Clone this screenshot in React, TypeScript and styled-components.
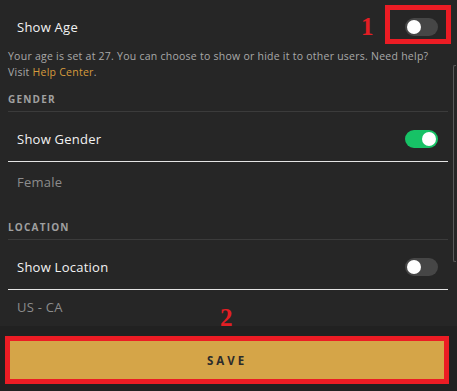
import React, { useState } from 'react';
import styled, { createGlobalStyle, css } from 'styled-components';

const GlobalStyle = createGlobalStyle`
  html, body {
    margin: 0;
    padding: 0;
    background: #262626;
  }
  body {
    font-family: "Open Sans", "Liberation Sans", sans-serif;
  }
`;

const Page = styled.div`
  position: relative;
  width: 457px;
  height: 391px;
  display: flex;
  flex-direction: column;
  overflow: hidden;
  background: #262626;
`;

const Content = styled.div`
  flex: 1;
  display: flex;
  flex-direction: column;
  padding: 0 9px 0 8px;
`;

const ToggleRow = styled.div<{ $first?: boolean }>`
  display: flex;
  align-items: center;
  justify-content: space-between;
  box-sizing: border-box;
  height: ${({ $first }) => ($first ? '48px' : '49px')};
  padding: ${({ $first }) => ($first ? '6px 10px 0 9px' : '5px 10px 0 9px')};
`;

const RowLabel = styled.span`
  font-size: 13px;
  letter-spacing: 0.25px;
  color: #f2f2f2;
`;

const Description = styled.p`
  margin: 0;
  font-size: 10.5px;
  line-height: 16px;
  letter-spacing: 0.25px;
  color: #a9a9a9;
`;

const HelpLink = styled.a`
  color: #d69b3c;
  text-decoration: none;
`;

const SectionLabel = styled.div<{ $gap: number }>`
  margin-top: ${({ $gap }) => $gap}px;
  font-size: 10px;
  line-height: 14px;
  font-weight: 700;
  letter-spacing: 1.2px;
  color: #a0a0a0;
`;

const Divider = styled.div<{ $light?: boolean }>`
  height: 1px;
  background: ${({ $light }) => ($light ? '#e4e4e4' : '#3b3b3b')};
  ${({ $light }) =>
    !$light &&
    css`
      margin-top: 5px;
    `}
`;

const ValueRow = styled.div<{ $height: number }>`
  display: flex;
  align-items: center;
  height: ${({ $height }) => $height}px;
  padding-left: 9px;
  font-size: 13px;
  letter-spacing: 0.25px;
  color: #8c8c8c;
`;

const Track = styled.button<{ $on: boolean }>`
  position: relative;
  width: 33px;
  height: 18px;
  padding: 0;
  border: none;
  border-radius: 9px;
  cursor: pointer;
  background: ${({ $on }) => ($on ? '#17c266' : '#464646')};
`;

const Knob = styled.span<{ $on: boolean }>`
  position: absolute;
  top: 2px;
  left: ${({ $on }) => ($on ? '17px' : '2px')};
  width: 14px;
  height: 14px;
  border-radius: 50%;
  background: #ffffff;
`;

const Footer = styled.div`
  height: 65px;
  box-sizing: border-box;
  padding: 10px 8px 0 5px;
  background: #212121;
`;

const Highlight = styled.div`
  border: 5px solid #ec1c24;
`;

const SaveButton = styled.button`
  display: block;
  width: 100%;
  height: 38px;
  border: none;
  background: #d5a548;
  font-family: "Open Sans", "Liberation Sans", sans-serif;
  font-size: 11.5px;
  font-weight: 700;
  letter-spacing: 3px;
  color: #2b2b2b;
  cursor: pointer;
`;

const MarkerBox = styled.div`
  position: absolute;
  left: 385px;
  top: 5px;
  width: 66px;
  height: 39px;
  box-sizing: border-box;
  border: 5px solid #ec1c24;
`;

const MarkerNumber = styled.span<{ $x: number; $y: number }>`
  position: absolute;
  left: ${({ $x }) => $x}px;
  top: ${({ $y }) => $y}px;
  font-family: "Liberation Serif", "DejaVu Serif", serif;
  font-weight: 700;
  font-size: 25px;
  line-height: 1;
  color: #e31e24;
`;

const ScrollThumb = styled.div`
  position: absolute;
  right: 1px;
  top: 65px;
  width: 2px;
  height: 195px;
  border: 1px solid #5a5a5a;
  border-right: none;
  border-radius: 2px 0 0 2px;
`;

type ToggleProps = { on: boolean; onChange: () => void };

const Toggle = ({ on, onChange }: ToggleProps) => (
  <Track $on={on} onClick={onChange} aria-pressed={on}>
    <Knob $on={on} />
  </Track>
);

export default function App() {
  const [showAge, setShowAge] = useState(false);
  const [showGender, setShowGender] = useState(true);
  const [showLocation, setShowLocation] = useState(false);

  return (
    <>
      <GlobalStyle />
      <Page>
        <Content>
          <ToggleRow $first>
            <RowLabel>Show Age</RowLabel>
            <Toggle on={showAge} onChange={() => setShowAge(!showAge)} />
          </ToggleRow>
          <Description>
            Your age is set at 27. You can choose to show or hide it to other users. Need help?
            <br />
            Visit <HelpLink href="#">Help Center</HelpLink>.
          </Description>

          <SectionLabel $gap={12}>GENDER</SectionLabel>
          <Divider />
          <ToggleRow>
            <RowLabel>Show Gender</RowLabel>
            <Toggle on={showGender} onChange={() => setShowGender(!showGender)} />
          </ToggleRow>
          <Divider $light />
          <ValueRow $height={40}>Female</ValueRow>

          <SectionLabel $gap={18}>LOCATION</SectionLabel>
          <Divider />
          <ToggleRow>
            <RowLabel>Show Location</RowLabel>
            <Toggle on={showLocation} onChange={() => setShowLocation(!showLocation)} />
          </ToggleRow>
          <Divider $light />
          <ValueRow $height={34}>US - CA</ValueRow>
        </Content>

        <Footer>
          <Highlight>
            <SaveButton>SAVE</SaveButton>
          </Highlight>
        </Footer>

        <MarkerBox />
        <MarkerNumber $x={361} $y={14}>1</MarkerNumber>
        <MarkerNumber $x={220} $y={305}>2</MarkerNumber>
        <ScrollThumb />
      </Page>
    </>
  );
}
